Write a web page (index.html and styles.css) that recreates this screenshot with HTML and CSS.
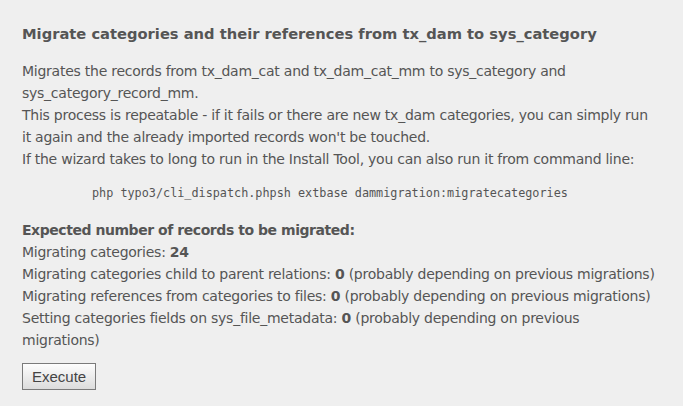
FILE: index.html
```html
<!DOCTYPE html>
<html>
<head>
<meta charset="utf-8">
<link rel="stylesheet" href="styles.css">
</head>
<body>
<div class="panel">
  <h2 class="title">Migrate categories and their references from tx_dam to sys_category</h2>
  <p class="intro">Migrates the records from tx_dam_cat and tx_dam_cat_mm to sys_category and sys_category_record_mm.<br>This process is repeatable - if it fails or there are new tx_dam categories, you can simply run it again and the already imported records won't be touched.<br>If the wizard takes to long to run in the Install Tool, you can also run it from command line:</p>
  <pre class="cmd">php typo3/cli_dispatch.phpsh extbase dammigration:migratecategories</pre>
  <p class="stats"><strong class="heading">Expected number of records to be migrated:</strong><br>Migrating categories: <strong>24</strong><br>Migrating categories child to parent relations: <strong>0</strong> (probably depending on previous migrations)<br>Migrating references from categories to files: <strong>0</strong> (probably depending on previous migrations)<br>Setting categories fields on sys_file_metadata: <strong>0</strong> (probably depending on previous migrations)</p>
  <button class="btn" type="button">Execute</button>
</div>
</body>
</html>
```
FILE: styles.css
```css
html, body {
  margin: 0;
  background: #efefef;
}
.panel {
  padding: 24px 22px 0 22px;
  width: 638px;
  font-family: "DejaVu Sans", sans-serif;
  font-size: 14px;
  color: #555;
}
.title {
  margin: 0 0 16px 0;
  font-size: 14.7px;
  line-height: 20px;
  font-weight: bold;
  color: #555;
}
.intro, .stats {
  margin: 0;
  line-height: 22px;
  letter-spacing: -0.25px;
}
.cmd {
  margin: 12px 0 15px 70px;
  font-family: "DejaVu Sans Mono", monospace;
  font-size: 11.8px;
  line-height: 22px;
  color: #555;
}
.stats strong {
  font-weight: bold;
}
.stats .heading {
  letter-spacing: -0.45px;
}
.btn {
  margin-top: 12px;
  height: 27px;
  padding: 0 9px;
  border: 1px solid #7a7a7a;
  border-radius: 0;
  background: linear-gradient(#fdfdfd, #dcdcdc);
  font-family: "Liberation Sans Narrow", "Liberation Sans", sans-serif;
  font-size: 15px;
  color: #444;
}
```
